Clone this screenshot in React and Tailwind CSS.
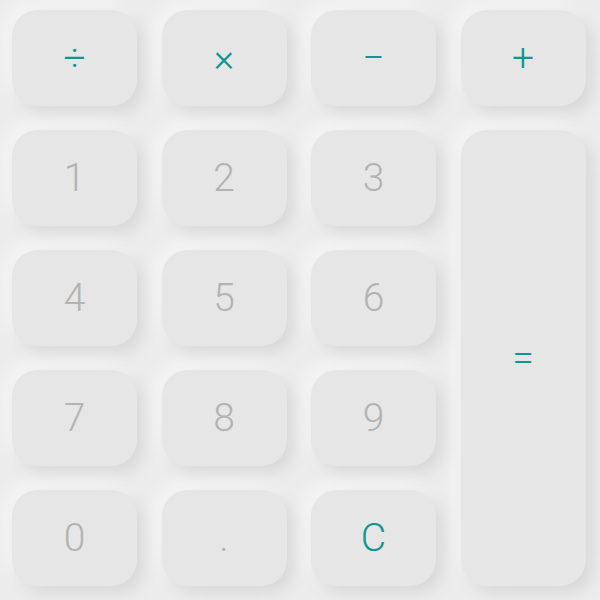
import React from "react";

const btn =
  "flex items-center justify-center rounded-[26px] bg-[#e6e6e6] shadow-[7px_7px_16px_#d8d8d8,-7px_-7px_16px_#f6f6f6] text-[39px] font-light leading-none select-none";

const keys = [
  { l: "÷", op: true },
  { l: "×", op: true },
  { l: "−", op: true },
  { l: "+", op: true },
  { l: "1" },
  { l: "2" },
  { l: "3" },
  { l: "=", op: true, tall: true },
  { l: "4" },
  { l: "5" },
  { l: "6" },
  { l: "7" },
  { l: "8" },
  { l: "9" },
  { l: "0" },
  { l: "." },
  { l: "C", op: true },
];

export default function App() {
  return (
    <div
      className="w-[600px] h-[600px] overflow-hidden bg-[#ececec]"
      style={{ fontFamily: "Roboto, 'Noto Sans', sans-serif" }}
    >
      <div className="grid grid-cols-[repeat(4,125px)] grid-rows-[repeat(5,96px)] gap-x-[24.5px] gap-y-[24px] pl-[12px] pt-[10px]">
        {keys.map((k) => (
          <div
            key={k.l}
            className={
              btn +
              " " +
              (k.op ? "text-[#0e9690]" : "text-[#b3b3b3]") +
              " " +
              (k.tall ? "row-span-4" : "")
            }
          >
            {k.l}
          </div>
        ))}
      </div>
    </div>
  );
}
